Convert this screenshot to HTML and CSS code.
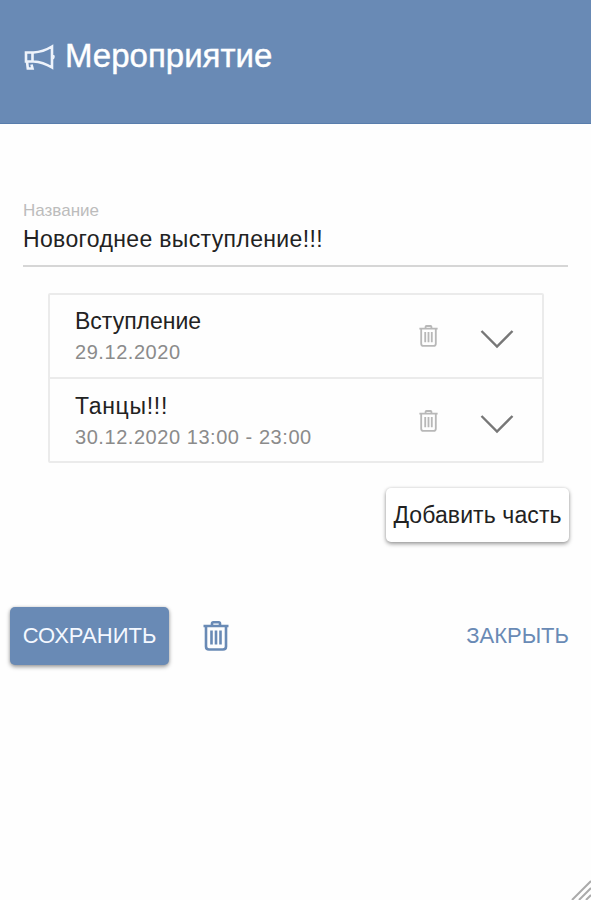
FILE: index.html
```
<!DOCTYPE html>
<html lang="ru">
<head>
<meta charset="utf-8">
<title>Мероприятие</title>
<link rel="stylesheet" href="styles.css">
</head>

<body>
  <svg class="symbols">
    <symbol id="trash" viewBox="0 0 26 30">
      <path d="M0.5 5h25M9 5V2.500Q9 1.300 10.200 1.300h5.600Q17 1.300 17 2.500V5M3 5v20.500Q3 28.500 6 28.500h14Q23 28.500 23 25.500V5M8.500 9.500v14M13 9.500v14M17.500 9.500v14" />
    </symbol>
    <symbol id="chevron" viewBox="0 0 34 20">
      <path d="M1.500 2L17 17.500 32.500 2" />
    </symbol>
  </svg>

  <div class="dialog">
    <div class="header">
      <svg class="horn" viewBox="0 0 31 27">
        <path d="M2 8.500h7.500Q19 8 28 2.500v21Q19 18 9.500 17.500H2zM8.500 8.500v9M3 17.500l.8 7H8.500l-1-4M28 10.500q3 2.300 0 4.600" />
      </svg>
      <h1>Мероприятие</h1>
    </div>

    <div class="field">
      <label for="name">Название</label>
      <input id="name" type="text" value="Новогоднее выступление!!!">
    </div>

    <ul class="parts">
      <li>
        <div class="info">
          <h4>Вступление</h4>
          <p>29.12.2020</p>
        </div>
        <svg class="remove"><use href="#trash" /></svg>
        <svg class="chevron"><use href="#chevron" /></svg>
      </li>
      <li>
        <div class="info">
          <h4 class="wide">Танцы!!!</h4>
          <p>30.12.2020 13:00 - 23:00</p>
        </div>
        <svg class="remove"><use href="#trash" /></svg>
        <svg class="chevron"><use href="#chevron" /></svg>
      </li>
    </ul>

    <div class="add">
      <button class="button">Добавить часть</button>
    </div>

    <div class="footer">
      <button class="button save">СОХРАНИТЬ</button>
      <svg class="delete"><use href="#trash" /></svg>
      <a class="close" href="#">ЗАКРЫТЬ</a>
    </div>

    <svg class="grip" viewBox="0 0 20 20">
      <path d="M1 20L20 1M8 20L20 8M15 20l5-5" />
    </svg>
  </div>
</body>

</html>
```

FILE: styles.css
```
* {
  box-sizing: border-box;
}

body {
  margin: 0;
  font-family: "Liberation Sans", Arial, sans-serif;
  color: #222;
  background: #fefefe;
}

h1, h4, p, ul {
  margin: 0;
  padding: 0;
  font-weight: normal;
  list-style: none;
}

svg {
  display: block;
  fill: none;
  flex: none;
}

.symbols {
  position: absolute;
  width: 0;
  height: 0;
}

.dialog {
  position: relative;
  height: 900px;
  overflow: hidden;
}

.header {
  display: flex;
  height: 124px;
  padding: 36px 24px 0;
  color: #fff;
  background: #698ab5;
  border-bottom: 1px solid #587dac;
}

.header h1 {
  margin-left: 10px;
  font-size: 33px;
  line-height: 40px;
  -webkit-text-stroke: 0.4px #fff;
}

.horn {
  width: 31px;
  height: 27px;
  margin-top: 8px;
  stroke: #eef3fb;
  stroke-width: 2.6;
}

.field {
  margin: 77px 23px 0;
  border-bottom: 2px solid #d6d6d6;
}

.field label {
  display: block;
  font-size: 17px;
  line-height: 20px;
  color: #bcbcbc;
}

.field input {
  display: block;
  width: 100%;
  height: 44px;
  padding: 0 0 8px;
  border: 0;
  outline: 0;
  font: 23px "Liberation Sans", Arial, sans-serif;
  letter-spacing: 0.35px;
  color: #222;
  background: none;
}

.parts {
  margin: 26px 47px 0 48px;
  border: 2px solid #ebebeb;
  border-radius: 2px;
}

.parts li {
  display: flex;
  height: 82px;
  padding: 10px 28px 0 25px;
}

.parts li + li {
  height: 84px;
  padding-top: 11px;
  border-top: 2px solid #ebebeb;
}

.info {
  flex: 1;
}

.info h4 {
  font-size: 23px;
  line-height: 32px;
}

.info .wide {
  letter-spacing: 0.7px;
}

.info p {
  font-size: 20px;
  line-height: 30px;
  letter-spacing: 0.55px;
  color: #8b8b8b;
}

.remove {
  width: 19px;
  height: 22px;
  margin-top: 20px;
  stroke: #b8b8b8;
  stroke-width: 2.5;
}

.chevron {
  width: 34px;
  height: 20px;
  margin: 24px 0 0 42px;
  stroke: #777;
  stroke-width: 2.4;
}

.add {
  display: flex;
  justify-content: flex-end;
  padding: 25px 22px 0 0;
}

.button {
  width: 183px;
  height: 54px;
  padding: 0;
  border: 0;
  border-radius: 5px;
  font: 23px "Liberation Sans", Arial, sans-serif;
  letter-spacing: 0.1px;
  color: #222;
  background: #fff;
  box-shadow: 0 2px 4px rgba(0, 0, 0, 0.38), 0 0 3px rgba(0, 0, 0, 0.12);
}

.footer {
  display: flex;
  align-items: center;
  padding: 65px 22px 0 10px;
}

.save {
  width: 159px;
  height: 58px;
  font-size: 22px;
  letter-spacing: 0;
  color: #f4f8ff;
  background: #698ab5;
}

.delete {
  width: 26px;
  height: 30px;
  margin-left: 34px;
  stroke: #698ab5;
  stroke-width: 2.6;
}

.close {
  margin-left: auto;
  font-size: 22px;
  color: #698ab5;
  text-decoration: none;
}

.grip {
  position: absolute;
  right: 0;
  bottom: 0;
  width: 20px;
  height: 20px;
  stroke: #aaa;
  stroke-width: 2;
}
```
